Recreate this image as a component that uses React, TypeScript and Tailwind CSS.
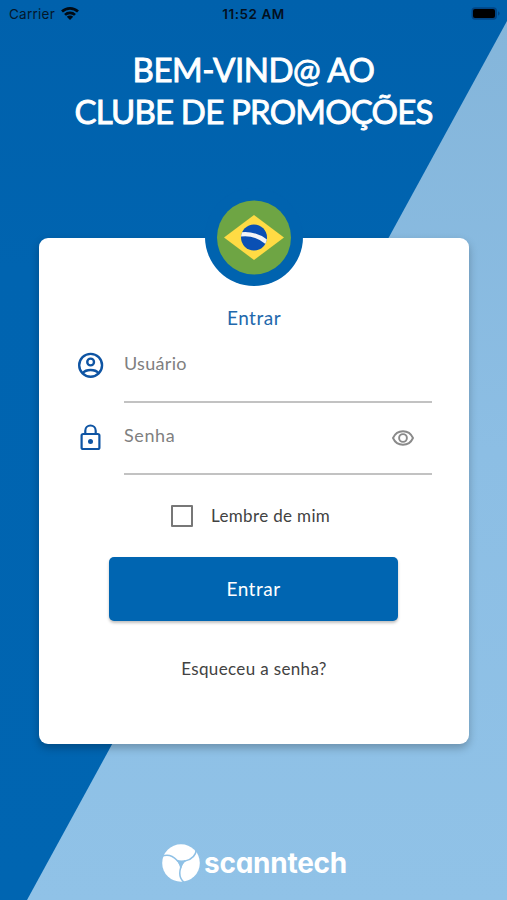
function StatusBar() {
  return (
    <header className="flex h-7 shrink-0 items-center px-[9px] font-['Inter',sans-serif] text-[13.5px] leading-none text-[#04172b]">
      <div className="flex flex-1 items-center gap-[6px]">
        <span className="pt-px tracking-[0.25px]">Carrier</span>
        <svg className="h-[14px] w-[18px]" viewBox="0 0 18 14" fill="none" stroke="#000a14" strokeWidth="2.7">
          <path d="M1 4.600a11.6 11.6 0 0 1 16 0" />
          <path d="M4 7.900a7.2 7.2 0 0 1 10 0" />
          <path d="M9 13.1 5.8 9.800a4.6 4.6 0 0 1 6.4 0Z" fill="#000a14" stroke="none" />
        </svg>
      </div>
      <span className="pt-px font-semibold tracking-[0.55px] text-[#03101f]">11:52 AM</span>
      <div className="flex flex-1 justify-end">
        <svg className="-mr-[3px] h-[14px] w-[30px]" viewBox="0 0 30 14">
          <rect x=".5" y=".3" width="25.5" height="12.4" rx="3.6" fill="#004585" />
          <rect x="2" y="2" width="22" height="9" rx="2" fill="#000" />
          <path d="M27.3 4.300v4.4c1.6-.7 1.6-3.7 0-4.4Z" fill="#003b73" />
        </svg>
      </div>
    </header>
  );
}

function BrazilFlag() {
  return (
    <svg className="size-[98px]" viewBox="0 0 98 98">
      <defs>
        <clipPath id="globe">
          <circle cx="49" cy="49.500" r="13" />
        </clipPath>
      </defs>
      <circle cx="49" cy="49" r="49" fill="#0063af" />
      <circle cx="49" cy="49.500" r="37" fill="#6ea544" />
      <path d="M19 49.500 49 27 79 49.500 49 72Z" fill="#ffdb44" />
      <circle cx="49" cy="49.500" r="13" fill="#0a50b4" />
      <path d="M33 46.800Q50 43.300 64 56" fill="none" stroke="#f2f4f6" strokeWidth="4.200" clipPath="url(#globe)" />
    </svg>
  );
}

function UserIcon() {
  return (
    <svg className="size-[30px]" viewBox="0 0 24 24" fill="none" stroke="#0e54a3" strokeWidth="1.9">
      <circle cx="11.700" cy="12.200" r="9.150" />
      <circle cx="11.700" cy="9.600" r="2.700" />
      <path d="M5.400 18.400C8.100 15.200 15.300 15.200 18 18.400" />
    </svg>
  );
}

function LockIcon() {
  return (
    <svg className="size-[30px]" viewBox="0 0 30 30" fill="none" stroke="#0e54a3" strokeWidth="2.200">
      <rect x="5.600" y="11" width="17.800" height="15" rx="1.600" />
      <path d="M9.300 11V7.700a5.200 5.200 0 0 1 10.400 0V11" />
      <circle cx="14.500" cy="18.500" r="2.500" fill="#0e54a3" stroke="none" />
    </svg>
  );
}

function EyeIcon() {
  return (
    <svg className="h-[16px] w-[22px]" viewBox="0 0 22 16" fill="none" stroke="#8a8a8a" strokeWidth="1.900">
      <path d="M1 8C5-1 17-1 21 8 17 17 5 17 1 8Z" strokeLinejoin="round" />
      <circle cx="11" cy="8" r="3.900" />
    </svg>
  );
}

function Brand() {
  return (
    <footer className="flex items-center gap-[4px] text-white">
      <svg className="size-[38px]" viewBox="0 0 38 38">
        <circle cx="19" cy="19" r="18.800" fill="#fff" />
        <g fill="none" stroke="#8fc1e6" strokeWidth="1.500">
          <path d="M-.5 12.500C6 9.500 11 12 15 16.300Q18.500 18.500 23.500 16.700" />
          <path d="M-.5 12.500C6 9.500 11 12 15 16.300Q18.500 18.500 23.500 16.700" transform="rotate(120 19 19)" />
          <path d="M-.5 12.500C6 9.500 11 12 15 16.300Q18.500 18.500 23.500 16.700" transform="rotate(240 19 19)" />
        </g>
        <path d="M15 16.500 23.200 16.800 18.800 23.700Z" fill="#8fc1e6" />
      </svg>
      <span className="font-['Inter',sans-serif] text-[28px] leading-[38px] font-bold tracking-[-0.250px] [font-feature-settings:'cv11']">
        scanntech
      </span>
    </footer>
  );
}

export default function App() {
  return (
    <div className="relative isolate flex h-[900px] w-[507px] flex-col overflow-hidden bg-linear-to-b from-[#0061ac] via-[#0064b0] via-30% to-[#0065b1] font-['Lato','Noto_Sans',sans-serif]">
      <div className="absolute inset-0 -z-10 bg-linear-to-b from-[#84b5da] via-[#8cbee4] to-[#90c2e7] [clip-path:polygon(507px_21px,507px_900px,27px_900px)]" />
      <StatusBar />
      <h1 className="mt-5 text-center text-[33px] leading-[42px] text-white [-webkit-text-stroke:0.9px_white]">
        <span className="block tracking-[-0.45px]">BEM-VIND@ AO</span>
        <span className="block tracking-[-0.8px]">CLUBE DE PROMOÇÕES</span>
      </h1>

      <main className="mt-[106px] ml-[39px] flex h-[506px] w-[430px] flex-col items-center rounded-[9px] bg-white shadow-[0_4px_9px_rgba(0,0,0,0.25)]">
        <div className="-mt-[50px]">
          <BrazilFlag />
        </div>
        <h2 className="mt-[20px] text-[19px] leading-6 tracking-[0.5px] text-[#2268ac]">Entrar</h2>

        <div className="mt-px flex h-[72px] w-[356px] items-start gap-[18px]">
          <div className="mt-[19px] shrink-0">
            <UserIcon />
          </div>
          <div className="flex h-[72px] flex-1 items-start border-b-2 border-[#c2c2c2] pt-[20px]">
            <span className="text-[18px] leading-6 tracking-[0.3px] text-[#808080]">Usuário</span>
          </div>
        </div>
        <div className="flex h-[72px] w-[356px] items-start gap-[18px]">
          <div className="mt-[20px] shrink-0">
            <LockIcon />
          </div>
          <div className="flex h-[72px] flex-1 items-start justify-between border-b-2 border-[#c2c2c2] pt-[20px] pr-[18px]">
            <span className="text-[18px] leading-6 tracking-[0.6px] text-[#808080]">Senha</span>
            <div className="mt-[7px]">
              <EyeIcon />
            </div>
          </div>
        </div>

        <label className="mt-[29px] flex items-center gap-[18px] self-start pl-[132px]">
          <span className="size-[22px] rounded-[1px] border-2 border-[#777]" />
          <span className="text-[17px] leading-6 tracking-[0.35px] text-[#424242]">Lembre de mim</span>
        </label>
        <button className="mt-[29px] ml-[70px] h-[64px] w-[289px] shrink-0 self-start rounded-[5px] bg-[#0065b1] text-[19px] tracking-[0.5px] text-white shadow-[0_2px_3px_rgba(0,0,0,0.25)]">
          Entrar
        </button>
        <a className="mt-9 text-[17px] leading-6 tracking-[0.35px] text-[#424242]">Esqueceu a senha?</a>
      </main>

      <div className="mt-[100px] ml-[162px]">
        <Brand />
      </div>
    </div>
  );
}
